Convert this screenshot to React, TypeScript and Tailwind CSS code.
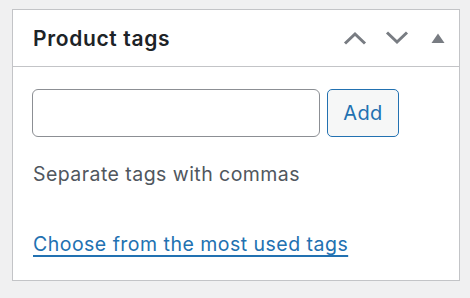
import type { FC } from "react";

const ChevronUp: FC = () => (
  <svg width="24" height="14" viewBox="0 0 24 14" fill="none">
    <path d="M2 12.5 L12 3 L22 12.5" stroke="#787c82" strokeWidth="3" strokeLinejoin="miter" />
  </svg>
);

const ChevronDown: FC = () => (
  <svg width="24" height="14" viewBox="0 0 24 14" fill="none">
    <path d="M2 1.5 L12 11 L22 1.5" stroke="#787c82" strokeWidth="3" strokeLinejoin="miter" />
  </svg>
);

const Triangle: FC = () => (
  <svg width="14" height="10" viewBox="0 0 14 10">
    <path d="M7 0.5 L13.5 10 L0.5 10 Z" fill="#787c82" />
  </svg>
);

const App: FC = () => {
  return (
    <div className="min-h-[298px] w-[470px] bg-[#f0f0f1] pl-[12px] pt-[9px] font-['Inter',sans-serif]">
      <div className="flex h-[272px] w-[448px] flex-col border border-[#c3c4c7] bg-white">
        {/* header */}
        <div className="flex h-[57px] items-center border-b border-[#c3c4c7] pl-[20px] pr-[14px]">
          <h2 className="flex-1 text-[21px] font-semibold leading-none tracking-[0.65px] text-[#1d2327]">
            Product tags
          </h2>
          <div className="flex items-center">
            <button type="button" className="flex h-[20px] w-[24px] items-center justify-center">
              <ChevronUp />
            </button>
            <button type="button" className="ml-[18px] flex h-[20px] w-[24px] items-center justify-center">
              <ChevronDown />
            </button>
            <button type="button" className="ml-[22px] flex h-[20px] w-[14px] items-center justify-center">
              <Triangle />
            </button>
          </div>
        </div>

        {/* body */}
        <div className="flex flex-col pl-[19px] pt-[22px]">
          <div className="flex gap-[7px]">
            <input
              type="text"
              className="h-[48px] w-[288px] rounded-[6px] border border-[#8c8f94] bg-white px-3 outline-none"
            />
            <button
              type="button"
              className="h-[48px] w-[72px] rounded-[5px] border border-[#2271b1] bg-[#f6f7f7] text-[20px] tracking-[0.4px] text-[#2271b1]"
            >
              Add
            </button>
          </div>
          <p className="mt-[23px] pl-[1px] text-[19.5px] leading-[28px] tracking-[0.45px] text-[#50575e]">
            Separate tags with commas
          </p>
          <a
            href="#"
            className="mt-[42px] w-fit pl-[1px] text-[19.5px] leading-[28px] tracking-[0.48px] text-[#2271b1] underline decoration-[2px] underline-offset-[4px]"
          >
            Choose from the most used tags
          </a>
        </div>
      </div>
    </div>
  );
};

export default App;
